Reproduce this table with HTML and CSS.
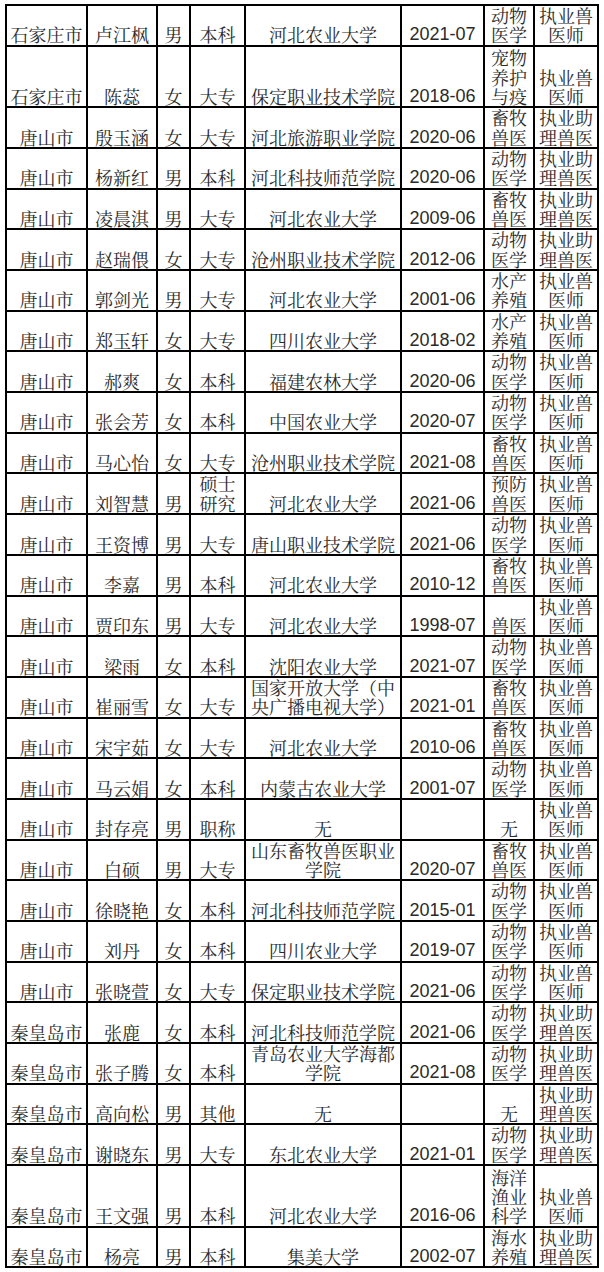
FILE: index.html
```html
<!DOCTYPE html>
<html lang="zh-CN">
<head>
<meta charset="utf-8">
<title>名单</title>
<link rel="stylesheet" href="styles.css">
</head>
<body>
<div class="sheet">
  <div class="row"><div class="c"><span>石家庄市</span></div><div class="c"><span>卢江枫</span></div><div class="c"><span>男</span></div><div class="c"><span>本科</span></div><div class="c"><span>河北农业大学</span></div><div class="c d"><span>2021-07</span></div><div class="c"><span>动物医学</span></div><div class="c"><span>执业兽医师</span></div></div>
  <div class="row tall"><div class="c"><span>石家庄市</span></div><div class="c"><span>陈蕊</span></div><div class="c"><span>女</span></div><div class="c"><span>大专</span></div><div class="c"><span>保定职业技术学院</span></div><div class="c d"><span>2018-06</span></div><div class="c"><span>宠物养护与疫</span></div><div class="c"><span>执业兽医师</span></div></div>
  <div class="row"><div class="c"><span>唐山市</span></div><div class="c"><span>殷玉涵</span></div><div class="c"><span>女</span></div><div class="c"><span>大专</span></div><div class="c"><span>河北旅游职业学院</span></div><div class="c d"><span>2020-06</span></div><div class="c"><span>畜牧兽医</span></div><div class="c"><span>执业助理兽医</span></div></div>
  <div class="row"><div class="c"><span>唐山市</span></div><div class="c"><span>杨新红</span></div><div class="c"><span>男</span></div><div class="c"><span>本科</span></div><div class="c"><span>河北科技师范学院</span></div><div class="c d"><span>2020-06</span></div><div class="c"><span>动物医学</span></div><div class="c"><span>执业助理兽医</span></div></div>
  <div class="row"><div class="c"><span>唐山市</span></div><div class="c"><span>凌晨淇</span></div><div class="c"><span>男</span></div><div class="c"><span>大专</span></div><div class="c"><span>河北农业大学</span></div><div class="c d"><span>2009-06</span></div><div class="c"><span>畜牧兽医</span></div><div class="c"><span>执业助理兽医</span></div></div>
  <div class="row"><div class="c"><span>唐山市</span></div><div class="c"><span>赵瑞偎</span></div><div class="c"><span>女</span></div><div class="c"><span>大专</span></div><div class="c"><span>沧州职业技术学院</span></div><div class="c d"><span>2012-06</span></div><div class="c"><span>动物医学</span></div><div class="c"><span>执业助理兽医</span></div></div>
  <div class="row"><div class="c"><span>唐山市</span></div><div class="c"><span>郭剑光</span></div><div class="c"><span>男</span></div><div class="c"><span>大专</span></div><div class="c"><span>河北农业大学</span></div><div class="c d"><span>2001-06</span></div><div class="c"><span>水产养殖</span></div><div class="c"><span>执业兽医师</span></div></div>
  <div class="row"><div class="c"><span>唐山市</span></div><div class="c"><span>郑玉轩</span></div><div class="c"><span>女</span></div><div class="c"><span>大专</span></div><div class="c"><span>四川农业大学</span></div><div class="c d"><span>2018-02</span></div><div class="c"><span>水产养殖</span></div><div class="c"><span>执业兽医师</span></div></div>
  <div class="row"><div class="c"><span>唐山市</span></div><div class="c"><span>郝爽</span></div><div class="c"><span>女</span></div><div class="c"><span>本科</span></div><div class="c"><span>福建农林大学</span></div><div class="c d"><span>2020-06</span></div><div class="c"><span>动物医学</span></div><div class="c"><span>执业兽医师</span></div></div>
  <div class="row"><div class="c"><span>唐山市</span></div><div class="c"><span>张会芳</span></div><div class="c"><span>女</span></div><div class="c"><span>本科</span></div><div class="c"><span>中国农业大学</span></div><div class="c d"><span>2020-07</span></div><div class="c"><span>动物医学</span></div><div class="c"><span>执业兽医师</span></div></div>
  <div class="row"><div class="c"><span>唐山市</span></div><div class="c"><span>马心怡</span></div><div class="c"><span>女</span></div><div class="c"><span>大专</span></div><div class="c"><span>沧州职业技术学院</span></div><div class="c d"><span>2021-08</span></div><div class="c"><span>畜牧兽医</span></div><div class="c"><span>执业兽医师</span></div></div>
  <div class="row"><div class="c"><span>唐山市</span></div><div class="c"><span>刘智慧</span></div><div class="c"><span>男</span></div><div class="c"><span>硕士研究</span></div><div class="c"><span>河北农业大学</span></div><div class="c d"><span>2021-06</span></div><div class="c"><span>预防兽医</span></div><div class="c"><span>执业兽医师</span></div></div>
  <div class="row"><div class="c"><span>唐山市</span></div><div class="c"><span>王资博</span></div><div class="c"><span>男</span></div><div class="c"><span>大专</span></div><div class="c"><span>唐山职业技术学院</span></div><div class="c d"><span>2021-06</span></div><div class="c"><span>动物医学</span></div><div class="c"><span>执业兽医师</span></div></div>
  <div class="row"><div class="c"><span>唐山市</span></div><div class="c"><span>李嘉</span></div><div class="c"><span>男</span></div><div class="c"><span>本科</span></div><div class="c"><span>河北农业大学</span></div><div class="c d"><span>2010-12</span></div><div class="c"><span>畜牧兽医</span></div><div class="c"><span>执业兽医师</span></div></div>
  <div class="row"><div class="c"><span>唐山市</span></div><div class="c"><span>贾印东</span></div><div class="c"><span>男</span></div><div class="c"><span>大专</span></div><div class="c"><span>河北农业大学</span></div><div class="c d"><span>1998-07</span></div><div class="c"><span>兽医</span></div><div class="c"><span>执业兽医师</span></div></div>
  <div class="row"><div class="c"><span>唐山市</span></div><div class="c"><span>梁雨</span></div><div class="c"><span>女</span></div><div class="c"><span>本科</span></div><div class="c"><span>沈阳农业大学</span></div><div class="c d"><span>2021-07</span></div><div class="c"><span>动物医学</span></div><div class="c"><span>执业兽医师</span></div></div>
  <div class="row"><div class="c"><span>唐山市</span></div><div class="c"><span>崔丽雪</span></div><div class="c"><span>女</span></div><div class="c"><span>大专</span></div><div class="c"><span>国家开放大学（中央广播电视大学）</span></div><div class="c d"><span>2021-01</span></div><div class="c"><span>畜牧兽医</span></div><div class="c"><span>执业兽医师</span></div></div>
  <div class="row"><div class="c"><span>唐山市</span></div><div class="c"><span>宋宇茹</span></div><div class="c"><span>女</span></div><div class="c"><span>大专</span></div><div class="c"><span>河北农业大学</span></div><div class="c d"><span>2010-06</span></div><div class="c"><span>畜牧兽医</span></div><div class="c"><span>执业兽医师</span></div></div>
  <div class="row"><div class="c"><span>唐山市</span></div><div class="c"><span>马云娟</span></div><div class="c"><span>女</span></div><div class="c"><span>本科</span></div><div class="c"><span>内蒙古农业大学</span></div><div class="c d"><span>2001-07</span></div><div class="c"><span>动物医学</span></div><div class="c"><span>执业兽医师</span></div></div>
  <div class="row"><div class="c"><span>唐山市</span></div><div class="c"><span>封存亮</span></div><div class="c"><span>男</span></div><div class="c"><span>职称</span></div><div class="c"><span>无</span></div><div class="c d"></div><div class="c"><span>无</span></div><div class="c"><span>执业兽医师</span></div></div>
  <div class="row"><div class="c"><span>唐山市</span></div><div class="c"><span>白硕</span></div><div class="c"><span>男</span></div><div class="c"><span>大专</span></div><div class="c"><span>山东畜牧兽医职业学院</span></div><div class="c d"><span>2020-07</span></div><div class="c"><span>畜牧兽医</span></div><div class="c"><span>执业兽医师</span></div></div>
  <div class="row"><div class="c"><span>唐山市</span></div><div class="c"><span>徐晓艳</span></div><div class="c"><span>女</span></div><div class="c"><span>本科</span></div><div class="c"><span>河北科技师范学院</span></div><div class="c d"><span>2015-01</span></div><div class="c"><span>动物医学</span></div><div class="c"><span>执业兽医师</span></div></div>
  <div class="row"><div class="c"><span>唐山市</span></div><div class="c"><span>刘丹</span></div><div class="c"><span>女</span></div><div class="c"><span>本科</span></div><div class="c"><span>四川农业大学</span></div><div class="c d"><span>2019-07</span></div><div class="c"><span>动物医学</span></div><div class="c"><span>执业兽医师</span></div></div>
  <div class="row"><div class="c"><span>唐山市</span></div><div class="c"><span>张晓萱</span></div><div class="c"><span>女</span></div><div class="c"><span>大专</span></div><div class="c"><span>保定职业技术学院</span></div><div class="c d"><span>2021-06</span></div><div class="c"><span>动物医学</span></div><div class="c"><span>执业兽医师</span></div></div>
  <div class="row"><div class="c"><span>秦皇岛市</span></div><div class="c"><span>张鹿</span></div><div class="c"><span>女</span></div><div class="c"><span>本科</span></div><div class="c"><span>河北科技师范学院</span></div><div class="c d"><span>2021-06</span></div><div class="c"><span>动物医学</span></div><div class="c"><span>执业助理兽医</span></div></div>
  <div class="row"><div class="c"><span>秦皇岛市</span></div><div class="c"><span>张子腾</span></div><div class="c"><span>女</span></div><div class="c"><span>本科</span></div><div class="c"><span>青岛农业大学海都学院</span></div><div class="c d"><span>2021-08</span></div><div class="c"><span>动物医学</span></div><div class="c"><span>执业助理兽医</span></div></div>
  <div class="row"><div class="c"><span>秦皇岛市</span></div><div class="c"><span>高向松</span></div><div class="c"><span>男</span></div><div class="c"><span>其他</span></div><div class="c"><span>无</span></div><div class="c d"></div><div class="c"><span>无</span></div><div class="c"><span>执业助理兽医</span></div></div>
  <div class="row"><div class="c"><span>秦皇岛市</span></div><div class="c"><span>谢晓东</span></div><div class="c"><span>男</span></div><div class="c"><span>大专</span></div><div class="c"><span>东北农业大学</span></div><div class="c d"><span>2021-01</span></div><div class="c"><span>动物医学</span></div><div class="c"><span>执业助理兽医</span></div></div>
  <div class="row tall"><div class="c"><span>秦皇岛市</span></div><div class="c"><span>王文强</span></div><div class="c"><span>男</span></div><div class="c"><span>本科</span></div><div class="c"><span>河北农业大学</span></div><div class="c d"><span>2016-06</span></div><div class="c"><span>海洋渔业科学</span></div><div class="c"><span>执业兽医师</span></div></div>
  <div class="row"><div class="c"><span>秦皇岛市</span></div><div class="c"><span>杨亮</span></div><div class="c"><span>男</span></div><div class="c"><span>本科</span></div><div class="c"><span>集美大学</span></div><div class="c d"><span>2002-07</span></div><div class="c"><span>海水养殖</span></div><div class="c"><span>执业助理兽医</span></div></div>
</div>
</body>
</html>
```

FILE: styles.css
```css
html, body {
  margin: 0;
  padding: 0;
  background: #fff;
}

.sheet {
  box-sizing: border-box;
  width: 594px;
  margin: 4px 0 0 5px;
  padding: 2px;
  background: #000;
  display: flex;
  flex-direction: column;
  gap: 2px;
}

.row {
  display: grid;
  grid-template-columns: 79px 68px 31px 53px 154px 81px 48px 62px;
  column-gap: 2px;
  height: 38.7px;
}

.row.tall {
  height: 59.6px;
}

.c {
  background: #fff;
  display: flex;
  flex-direction: column;
  justify-content: flex-end;
  align-items: center;
  text-align: center;
  font-family: "Noto Serif CJK SC", "Noto Sans CJK SC", sans-serif;
  font-size: 18px;
  line-height: 19.35px;
  color: #2a2a2a;
}

.c span {
  display: block;
}

.c.d {
  font-family: "Liberation Sans", Arial, "Noto Sans CJK SC", sans-serif;
}
```
